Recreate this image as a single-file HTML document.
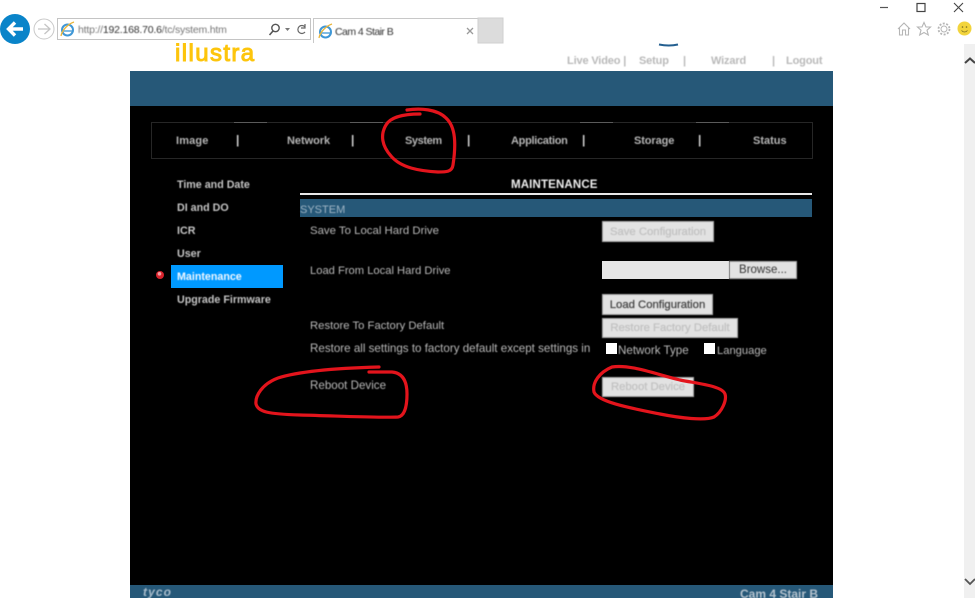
<!DOCTYPE html>
<html><head><meta charset="utf-8"><title>Cam 4 Stair B</title>
<style>
html,body{margin:0;padding:0;background:#fff;width:975px;height:598px;overflow:hidden}
body{position:relative;font-family:"Liberation Sans",sans-serif}
div,span.t{position:absolute;white-space:nowrap}
.t{filter:blur(.45px);line-height:14px}
.nav{font-size:11px;font-weight:bold;color:#b5b5b5;top:134px}
.sep{font-size:12px;color:#d0d0d0;font-weight:bold;top:133px}
.side{font-size:10.7px;font-weight:bold;color:#c4c4c4;left:177px}
.lbl{font-size:11.6px;color:#b8b8b8;left:310px}
.btn{background:#e2e2e2;border:1px solid #a8a8a8;box-sizing:border-box;text-align:center;font-size:11.3px;font-weight:normal;-webkit-text-stroke:.3px #c2c2c2;color:#c2c2c2;filter:blur(.5px)}
.top{font-size:11px;font-weight:bold;color:#b9b9b9;top:54px;letter-spacing:-.15px}
.cb{width:11px;height:11px;background:#fff}
</style></head><body>
<!-- browser chrome -->
<svg style="position:absolute;left:0;top:0;filter:blur(.3px)" width="975" height="80">
<circle cx="15" cy="29" r="15" fill="#0a84c9"/>
<path d="M23 29H9M15 22.500L8.500 29L15 35.500" fill="none" stroke="#fff" stroke-width="3.400"/>
<circle cx="44" cy="29" r="10" fill="#fff" stroke="#c9c9c9"/>
<path d="M38 29H49M44.500 24L50 29L44.500 34" fill="none" stroke="#c4c4c4" stroke-width="1.300"/>
<rect x="57.500" y="18.500" width="253" height="21" fill="#fff" stroke="#c4c4c4"/>
<g fill="none"><ellipse cx="67.500" cy="30" rx="5.500" ry="5.500" stroke="#3f97d6" stroke-width="2"/><path d="M62 31H73" stroke="#3f97d6" stroke-width="1.300"/><path d="M61 36C62 30 68 24 74 22" stroke="#eab53a" stroke-width="1.300"/></g>
<circle cx="275.500" cy="28" r="3.700" fill="none" stroke="#555" stroke-width="1.400"/><path d="M273 31L269.500 35" stroke="#555" stroke-width="1.600"/>
<path d="M285 28H290L287.500 31Z" fill="#777"/>
<path d="M305 27A4 4 0 1 0 305 32M305 24V28H301" fill="none" stroke="#666" stroke-width="1.200"/>
<path d="M313.500 43V18.500H478" fill="#fff" stroke="#c8c8c8"/>
<rect x="478" y="18" width="25" height="25" fill="#dcdcdc" stroke="#cfcfcf"/>
<g fill="none"><ellipse cx="325.500" cy="32" rx="5.500" ry="5.500" stroke="#3f97d6" stroke-width="2"/><path d="M320 33H331" stroke="#3f97d6" stroke-width="1.300"/><path d="M319 38C320 32 326 26 332 24" stroke="#eab53a" stroke-width="1.300"/></g>
<path d="M467 28L473 34M473 28L467 34" stroke="#9a9a9a" stroke-width="1.300"/>
<path d="M880 7.500H888" stroke="#555" stroke-width="1.200"/>
<rect x="917" y="3.500" width="8" height="8" fill="none" stroke="#444" stroke-width="1.200"/>
<path d="M954 3L963 12M963 3L954 12" stroke="#444" stroke-width="1.100"/>
<path d="M898 29L904 23L910 29M899.500 28V35H902.500V30H905.500V35H908.500V28" fill="none" stroke="#b5b5b5" stroke-width="1.100"/>
<path d="M924 22.500L926 27H930.500L927 30.200L928.300 35L924 32.500L919.700 35L921 30.200L917.500 27H922Z" fill="none" stroke="#b5b5b5" stroke-width="1.100"/>
<circle cx="944" cy="29" r="3" fill="none" stroke="#b5b5b5"/><circle cx="944" cy="29" r="5.500" fill="none" stroke="#b5b5b5" stroke-width="1.800" stroke-dasharray="2 1.500"/>
<circle cx="964.500" cy="28.500" r="7" fill="#f2d43d"/><circle cx="962.500" cy="27" r=".8" fill="#776a20"/><circle cx="966.500" cy="27" r=".8" fill="#776a20"/><path d="M961.500 30.500Q964.500 33.500 967.500 30.500" fill="none" stroke="#776a20" stroke-width=".8"/>
<path d="M659 44.500Q669 46.500 678 44.500" fill="none" stroke="#235f90" stroke-width="2"/>
</svg>
<span class="t" style="left:78px;top:23px;font-size:10.5px;color:#777;letter-spacing:-.2px">http://<span style="color:#333">192.168.70.6</span>/tc/system.htm</span>
<span class="t" style="left:335px;top:25px;font-size:10.5px;color:#333;letter-spacing:-.55px">Cam 4 Stair B</span>
<span class="t" style="left:175px;top:40px;font-size:24px;line-height:28px;color:#fdc50c;letter-spacing:1.4px;-webkit-text-stroke:1px #fdc50c;filter:blur(.3px)">illustra</span>
<span class="t top" style="left:567px">Live Video |</span>
<span class="t top" style="left:639px">Setup</span><span class="t top" style="left:683px">|</span>
<span class="t top" style="left:711px">Wizard</span><span class="t top" style="left:772px">|</span>
<span class="t top" style="left:786px">Logout</span>
<!-- scrollbar -->
<div style="left:964px;top:44px;width:11px;height:554px;background:#f0f0f0"></div>
<svg style="position:absolute;left:964px;top:55px" width="11" height="12"><path d="M1 8L6 3.500L11 8" fill="none" stroke="#444" stroke-width="2"/></svg>
<svg style="position:absolute;left:964px;top:576px" width="11" height="12"><path d="M1 3L6 8L11 3" fill="none" stroke="#555" stroke-width="1.800"/></svg>
<!-- page -->
<div style="left:130px;top:71px;width:703px;height:35px;background:#265878"></div>
<div style="left:130px;top:106px;width:703px;height:479px;background:#000"></div>
<div style="left:130px;top:585px;width:703px;height:13px;background:#265878"></div>
<div style="left:151px;top:122px;width:660px;height:35px;border:1px solid #262626"></div>
<div style="left:234px;top:122px;width:33px;height:1px;background:#5a5a5a"></div>
<div style="left:350px;top:122px;width:33px;height:1px;background:#5a5a5a"></div>
<div style="left:580px;top:122px;width:33px;height:1px;background:#5a5a5a"></div>
<div style="left:696px;top:122px;width:33px;height:1px;background:#5a5a5a"></div>
<span class="t nav" style="left:176px;letter-spacing:.15px">Image</span><span class="t sep" style="left:236px">|</span>
<span class="t nav" style="left:287px;letter-spacing:-.05px">Network</span><span class="t sep" style="left:351px">|</span>
<span class="t nav" style="left:405px;letter-spacing:-.4px">System</span><span class="t sep" style="left:467px">|</span>
<span class="t nav" style="left:511px;letter-spacing:-.3px">Application</span><span class="t sep" style="left:582px">|</span>
<span class="t nav" style="left:634px;letter-spacing:-.1px">Storage</span><span class="t sep" style="left:698px">|</span>
<span class="t nav" style="left:753px;letter-spacing:0">Status</span>
<span class="t side" style="top:178px">Time and Date</span>
<span class="t side" style="top:201px">DI and DO</span>
<span class="t side" style="top:224px">ICR</span>
<span class="t side" style="top:247px">User</span>
<div style="left:171px;top:265px;width:112px;height:23px;background:#0099ff"></div>
<span class="t side" style="top:270px;color:#f2f8ff">Maintenance</span>
<span class="t side" style="top:293px">Upgrade Firmware</span>
<svg style="position:absolute;left:155px;top:270px;filter:blur(.3px)" width="10" height="10"><circle cx="5" cy="5" r="4" fill="#d8222c"/><circle cx="4.500" cy="3.800" r="1.800" fill="#f3a0a4"/></svg>
<span class="t" style="left:511px;top:178px;font-size:11.5px;font-weight:bold;color:#f0f0f0;letter-spacing:.15px">MAINTENANCE</span>
<div style="left:300px;top:193px;width:512px;height:2px;background:#e8e8e8"></div>
<div style="left:300px;top:199px;width:512px;height:18px;background:#265878"></div>
<span class="t" style="left:300px;top:203px;font-size:11px;color:#9fb5c5">SYSTEM</span>
<span class="t lbl" style="top:224px;font-size:11.4px">Save To Local Hard Drive</span>
<span class="t lbl" style="top:264px;font-size:11.2px">Load From Local Hard Drive</span>
<span class="t lbl" style="top:319px;font-size:11.3px">Restore To Factory Default</span>
<span class="t lbl" style="top:342px">Restore all settings to factory default except settings in</span>
<span class="t lbl" style="top:379px">Reboot Device</span>
<div class="btn" style="left:602px;top:221px;width:112px;height:21px;line-height:20px">Save Configuration</div>
<div style="left:602px;top:261px;width:127px;height:18px;background:#e6e6e6"></div>
<div class="btn" style="left:729px;top:261px;width:68px;height:18px;color:#333;-webkit-text-stroke:0;line-height:16px;font-size:11.5px">Browse...</div>
<div class="btn" style="left:602px;top:294px;width:111px;height:21px;color:#444;-webkit-text-stroke:.25px #444;line-height:20px">Load Configuration</div>
<div class="btn" style="left:602px;top:318px;width:136px;height:20px;line-height:18px">Restore Factory Default</div>
<div class="cb" style="left:606px;top:343px"></div>
<span class="t lbl" style="left:618px;top:344px">Network Type</span>
<div class="cb" style="left:704px;top:343px"></div>
<span class="t lbl" style="left:717px;top:344px;font-size:11.2px">Language</span>
<div class="btn" style="left:602px;top:377px;width:92px;height:20px;line-height:19px">Reboot Device</div>
<span class="t" style="left:143px;top:585px;font-size:12px;font-style:italic;font-weight:bold;color:#a9bdcc;letter-spacing:1.1px">tyco</span>
<span class="t" style="left:740px;top:587px;font-size:12px;font-weight:bold;color:#b5c3ce">Cam 4 Stair B</span>
<!-- red annotations -->
<svg style="position:absolute;left:0;top:0;filter:blur(.3px)" width="975" height="598" fill="none" stroke="#e3141c" stroke-width="3.200" stroke-linecap="round" stroke-linejoin="round">
<path d="M407 110C420 108 437 109 446 118C456 127 456 145 453 165C452 172 446 172 438 172C420 171 401 168 391 156C382 146 380 135 386 125C390 118 400 114 420 114"/>
<path d="M379 367C340 368 300 371 278 378C262 384 255 396 256 404C258 412 268 414 300 415C340 416 380 418 398 417C405 416 407 405 407 394C407 382 403 373 392 372L369 372"/>
<path d="M612 367C600 372 592 382 594 392C598 402 630 408 660 414C680 418 705 421 714 417C722 412 727 400 725 394C722 386 700 384 680 380C655 374 630 364 612 367Z"/>
</svg>
</body></html>
